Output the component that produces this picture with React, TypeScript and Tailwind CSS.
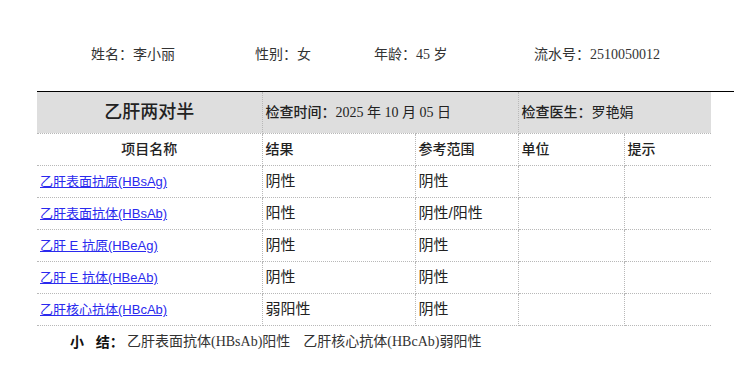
import React from "react";

const serif = "font-['Liberation_Serif','Noto_Sans_CJK_SC',serif]";
const sans = "font-['Liberation_Sans','Noto_Sans_CJK_SC',sans-serif]";

const rows = [
  { name: "乙肝表面抗原(HBsAg)", result: "阴性", range: "阴性" },
  { name: "乙肝表面抗体(HBsAb)", result: "阳性", range: "阴性/阳性" },
  { name: "乙肝 E 抗原(HBeAg)", result: "阴性", range: "阴性" },
  { name: "乙肝 E 抗体(HBeAb)", result: "阴性", range: "阴性" },
  { name: "乙肝核心抗体(HBcAb)", result: "弱阳性", range: "阴性" },
];

const cell = "border-b border-dotted border-[#b8b8b8] h-8 align-middle p-0";
const divider = "border-r border-dotted border-[#b8b8b8]";

export default function App() {
  return (
    <div className={`w-[748px] h-[385px] bg-white text-[#222] ${sans}`}>
      <div className={`flex pt-[45px] pl-[91px] h-[91px] text-sm text-[#333] ${serif}`}>
        <span className="w-[164px]">姓名：李小丽</span>
        <span className="w-[119px]">性别：女</span>
        <span className="w-[160px]">年龄：45 岁</span>
        <span>流水号：2510050012</span>
      </div>

      <div className="ml-[37px] w-[697px] border-t border-black">
        <table className="w-[674px] table-fixed border-collapse">
          <colgroup>
            <col className="w-[225px]" />
            <col className="w-[153px]" />
            <col className="w-[103px]" />
            <col className="w-[106px]" />
            <col className="w-[87px]" />
          </colgroup>
          <tbody>
            <tr className="bg-[#dedede]">
              <td className={`${cell} ${divider} h-[41px] text-center text-lg font-medium`}>乙肝两对半</td>
              <td colSpan={2} className={`${cell} ${divider} h-[41px] pl-[3px] text-sm`}>
                <span className="font-medium">检查时间：</span>
                <span className={serif}>2025 年 10 月 05 日</span>
              </td>
              <td colSpan={2} className={`${cell} h-[41px] pl-[3px] text-sm`}>
                <span className="font-medium">检查医生：</span>
                <span className={serif}>罗艳娟</span>
              </td>
            </tr>
            <tr className="text-sm font-medium">
              <td className={`${cell} ${divider} text-center`}>项目名称</td>
              <td className={`${cell} ${divider} pl-[3px]`}>结果</td>
              <td className={`${cell} ${divider} pl-[3px]`}>参考范围</td>
              <td className={`${cell} ${divider} pl-[3px]`}>单位</td>
              <td className={`${cell} pl-[3px]`}>提示</td>
            </tr>
            {rows.map((r) => (
              <tr key={r.name}>
                <td className={`${cell} ${divider} pl-[3px]`}>
                  <a href="#" className="text-[13px] text-[#2a2aee] underline">
                    {r.name}
                  </a>
                </td>
                <td className={`${cell} ${divider} pl-[3px] text-[15px]`}>{r.result}</td>
                <td className={`${cell} ${divider} pl-[3px] text-[15px]`}>{r.range}</td>
                <td className={`${cell} ${divider}`}></td>
                <td className={cell}></td>
              </tr>
            ))}
          </tbody>
        </table>
      </div>

      <div className={`flex pl-[70px] pt-[6px] text-sm text-[#333] ${serif}`}>
        <span className={`w-[57px] font-bold text-[#111] ${sans}`}>小&nbsp;&nbsp;&nbsp;结：</span>
        <span>乙肝表面抗体(HBsAb)阳性</span>
        <span className="ml-[13px]">乙肝核心抗体(HBcAb)弱阳性</span>
      </div>
    </div>
  );
}
